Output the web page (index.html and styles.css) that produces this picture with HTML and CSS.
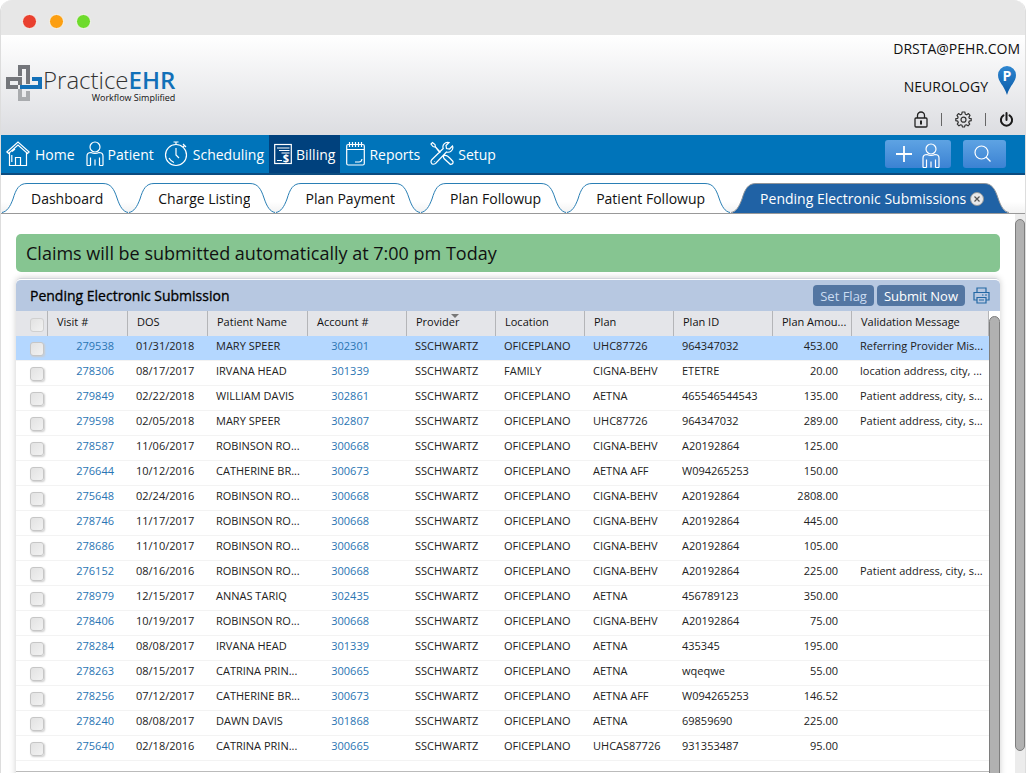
FILE: index.html
```html
<!DOCTYPE html>
<html lang="en">
<head>
<meta charset="utf-8">
<title>Practice EHR - Billing</title>
<link rel="stylesheet" href="styles.css">
</head>
<body>
<svg class="defs" aria-hidden="true">
  <symbol id="edge-left" viewBox="0 0 29 30"><path d="M0 30C5 29 8 24 11 16C14 6 17 .5 25 .5H29V30Z" stroke="none"/><path d="M0 29.500C5 28.500 8 24 11 16C14 6 17 .5 25 .5H29" fill="none"/></symbol>
  <symbol id="edge-right" viewBox="0 0 25 30"><path d="M0 .5C8 .5 11 6 14 15C17 24 20 29 25 30H0Z" stroke="none"/><path d="M0 .5C8 .5 11 6 14 15C17 24 20 28.500 25 29.500" fill="none"/></symbol>
  <symbol id="person" viewBox="0 0 18 25"><circle cx="9" cy="6" r="5"/><path d="M1 24.500V15C1 12.500 2.500 11.500 5 11.500Q9 13.500 13 11.500C15.500 11.500 17 12.500 17 15V24.500M4.500 24.500V16.500M13.500 24.500V16.500M9 24.500V18.500M1 24.500H4.500M13.500 24.500H17"/></symbol>
</svg>
<div class="window">
  <div class="titlebar"><span class="dot red"></span><span class="dot amber"></span><span class="dot green"></span></div>

  <header class="header">
    <div class="logo">
      <svg width="38" height="38" viewBox="0 0 38 38" fill="none" stroke-width="4">
        <path d="M15 25V35H23V27" stroke="#a9abae"/>
        <path d="M15 21V15H3V23H13" stroke="#74767b"/>
        <path d="M15 12V3H23V20" stroke="#74767b"/>
        <path d="M27 15H35V23H15" stroke="#1270b8"/>
      </svg>
      <div class="logo-text">
        <div class="logo-name">Practice<b>EHR</b></div>
        <div class="logo-tag">Workflow Simplified</div>
      </div>
    </div>
    <div class="account">
      <div class="account-user">DRSTA@PEHR.COM</div>
      <div class="account-site">
        <span>NEUROLOGY</span>
        <svg width="18" height="30" viewBox="0 0 18 30"><defs><linearGradient id="pin" x1="0" y1="0" x2="0" y2="1"><stop offset="0" stop-color="#2f86d0"/><stop offset="1" stop-color="#0a5ba8"/></linearGradient></defs><path d="M9 1A9 9 0 0 0 0 10C0 17 6 20 9 30C12 20 18 17 18 10A9 9 0 0 0 9 1Z" fill="url(#pin)"/><text x="9" y="16" text-anchor="middle" class="pin-letter">P</text></svg>
      </div>
      <div class="account-tools">
        <button aria-label="Lock"><svg width="14" height="17" viewBox="0 0 14 17" fill="none" stroke="#222" stroke-width="1.300"><rect x="1" y="7" width="12" height="9" rx="1"/><path d="M3.500 7V4.500a3.500 3.500 0 0 1 7 0V7"/><path d="M7 9.500V13.500" stroke-width="2"/></svg></button>
        <i></i>
        <button aria-label="Settings"><svg width="17" height="17" viewBox="0 0 17 17" fill="none" stroke="#333" stroke-width="1.200" stroke-linejoin="round"><path d="M7.200 1H9.800L10.300 3.200L11.700 3.800L13.500 2.600L15 4.400L13.900 6.100L14.300 7.300L16.200 7.700V9.700L14.200 10.200L13.700 11.400L14.700 13.100L13 14.800L11.300 13.800L10 14.300L9.500 16H7.500L7 14.300L5.700 13.800L4 14.800L2.300 13.100L3.300 11.400L2.800 10.200L.8 9.700V7.700L2.700 7.300L3.100 6.100L2 4.400L3.500 2.600L5.300 3.800L6.700 3.200Z"/><circle cx="8.500" cy="8.700" r="2.500"/></svg></button>
        <i></i>
        <button aria-label="Log out"><svg width="15" height="17" viewBox="0 0 15 17" fill="none" stroke="#1a1a1a" stroke-width="2" stroke-linecap="round"><path d="M4.500 4.300a5.600 5.600 0 1 0 6 0M7.500 2V9"/></svg></button>
      </div>
    </div>
  </header>

  <nav class="nav">
    <a href="#"><svg width="24" height="26" viewBox="0 0 24 26"><path d="M.8 11L12 1L23.200 11L21.500 12.500L12 4L2.500 12.500ZM3.500 12V24.500H20.500V12M9.500 24.500V16.500H14.500V24.500M5.800 14V21M6 10.500L9 8"/></svg><span>Home</span></a>
    <a href="#"><svg width="18" height="26" viewBox="0 0 18 26"><use href="#person" width="18" height="25"/></svg><span>Patient</span></a>
    <a href="#" class="wide"><svg width="24" height="26" viewBox="0 0 24 26"><circle cx="12" cy="14" r="10.500"/><path d="M12 7V14L15 17M9.500 1H14.500M12 1V3.500M19 3L22 6M20.500 4.500L19 6M5 17Q7 20.500 10 21.500"/></svg><span>Scheduling</span></a>
    <a href="#" class="current"><svg width="18" height="26" viewBox="0 0 18 26"><rect x=".7" y="3.500" width="16.600" height="19"/><path d="M3 7H15.500M5 9.500H15.500M7.500 12H15.500M3 19.500H8"/><text x="12" y="21" text-anchor="middle" class="dollar">$</text></svg><span>Billing</span></a>
    <a href="#"><svg width="19" height="26" viewBox="0 0 19 26"><rect x=".7" y="3.500" width="17.600" height="20.500" rx="1.500"/><path d="M3.500 1V6M6.500 1V6M9.500 1V6M12.500 1V6M15.500 1V6M1 8.500H18M9 21H13Q15.500 21 16 18"/></svg><span>Reports</span></a>
    <a href="#" class="last"><svg width="24" height="26" viewBox="0 0 24 26"><path d="M10.500 11.500L5.500 6L5 3.500L2.500 1.500L1 3L3 5.500L5.500 6.200L10 12M14 14.500C17 14 18 15 23 20.500Q23.500 23 20.500 23.500L14 17.500Q13 16 14 14.500ZM22.500 5L19.500 8L16.500 7.500L16 4.500L19 1.500C15 .5 12 4 13.200 7.500L2 18.500C0 20.500 1.500 25 5.500 22.500L16.500 11C20 12 24 9 22.500 5ZM4.500 20V20.500"/></svg><span>Setup</span></a>
    <div class="nav-actions">
      <button class="nav-button add" aria-label="Add patient"><svg width="16" height="16" viewBox="0 0 16 16"><path d="M8 0V16M0 8H16" stroke-width="1.800"/></svg><svg width="18" height="25" viewBox="0 0 18 25"><use href="#person" width="18" height="25"/></svg></button>
      <button class="nav-button find" aria-label="Search"><svg width="18" height="18" viewBox="0 0 18 18"><circle cx="7.500" cy="7.500" r="6.500"/><path d="M12 12L16.500 16.500"/></svg></button>
    </div>
  </nav>

  <div class="tabs" role="tablist">
    <button class="tab" role="tab"><svg width="29" height="30"><use href="#edge-left"/></svg><span>Dashboard</span><svg width="25" height="30"><use href="#edge-right"/></svg></button>
    <button class="tab" role="tab"><svg width="29" height="30"><use href="#edge-left"/></svg><span>Charge Listing</span><svg width="25" height="30"><use href="#edge-right"/></svg></button>
    <button class="tab" role="tab"><svg width="29" height="30"><use href="#edge-left"/></svg><span>Plan Payment</span><svg width="25" height="30"><use href="#edge-right"/></svg></button>
    <button class="tab" role="tab"><svg width="29" height="30"><use href="#edge-left"/></svg><span>Plan Followup</span><svg width="25" height="30"><use href="#edge-right"/></svg></button>
    <button class="tab" role="tab"><svg width="29" height="30"><use href="#edge-left"/></svg><span>Patient Followup</span><svg width="25" height="30"><use href="#edge-right"/></svg></button>
    <button class="tab active" role="tab" aria-selected="true"><svg width="29" height="30"><use href="#edge-left"/></svg><span>Pending Electronic Submissions<svg width="14" height="14" viewBox="0 0 14 14"><circle cx="7" cy="7" r="6.500" fill="#e9e9e9"/><path d="M4.500 4.500L9.500 9.500M9.500 4.500L4.500 9.500" stroke="#555" stroke-width="1.200"/></svg></span><svg width="25" height="30"><use href="#edge-right"/></svg></button>
  </div>

  <div class="page">
    <main class="content">
      <div class="banner">Claims will be submitted automatically at 7:00 pm Today</div>
      <section class="panel">
        <div class="panel-head">
          <h1>Pending Electronic Submission</h1>
          <button class="action muted">Set Flag</button>
          <button class="action">Submit Now</button>
          <button class="print" aria-label="Print"><svg width="17" height="17" viewBox="0 0 17 17" fill="none" stroke="#2468a4" stroke-width="1.200"><path d="M4 5V1H13V5M4 13H1V5.500H16V13H13M4 10.500H13V16H4ZM6 13H11M9 8H10.500M12 8H14"/></svg></button>
        </div>
        <div class="panel-body">
          <div class="grid">
            <table>
              <colgroup><col class="c-check"><col class="c-80"><col class="c-80"><col class="c-100"><col class="c-99"><col class="c-89"><col class="c-89"><col class="c-89"><col class="c-99"><col class="c-79"><col></colgroup>
              <thead><tr><th><input type="checkbox" aria-label="Select all"></th><th>Visit #</th><th>DOS</th><th>Patient Name</th><th>Account #</th><th class="sorted">Provider</th><th>Location</th><th>Plan</th><th>Plan ID</th><th>Plan Amou...</th><th>Validation Message</th></tr></thead>
              <tbody>
                <tr class="selected"><td><input type="checkbox" aria-label="Select 279538"></td><td><a href="#">279538</a></td><td>01/31/2018</td><td>MARY SPEER</td><td><a href="#">302301</a></td><td>SSCHWARTZ</td><td>OFICEPLANO</td><td>UHC87726</td><td>964347032</td><td>453.00</td><td>Referring Provider Mis...</td></tr>
                <tr><td><input type="checkbox" aria-label="Select 278306"></td><td><a href="#">278306</a></td><td>08/17/2017</td><td>IRVANA HEAD</td><td><a href="#">301339</a></td><td>SSCHWARTZ</td><td>FAMILY</td><td>CIGNA-BEHV</td><td>ETETRE</td><td>20.00</td><td>location address, city, ...</td></tr>
                <tr><td><input type="checkbox" aria-label="Select 279849"></td><td><a href="#">279849</a></td><td>02/22/2018</td><td>WILLIAM DAVIS</td><td><a href="#">302861</a></td><td>SSCHWARTZ</td><td>OFICEPLANO</td><td>AETNA</td><td>465546544543</td><td>135.00</td><td>Patient address, city, s...</td></tr>
                <tr><td><input type="checkbox" aria-label="Select 279598"></td><td><a href="#">279598</a></td><td>02/05/2018</td><td>MARY SPEER</td><td><a href="#">302807</a></td><td>SSCHWARTZ</td><td>OFICEPLANO</td><td>UHC87726</td><td>964347032</td><td>289.00</td><td>Patient address, city, s...</td></tr>
                <tr><td><input type="checkbox" aria-label="Select 278587"></td><td><a href="#">278587</a></td><td>11/06/2017</td><td>ROBINSON RO...</td><td><a href="#">300668</a></td><td>SSCHWARTZ</td><td>OFICEPLANO</td><td>CIGNA-BEHV</td><td>A20192864</td><td>125.00</td><td></td></tr>
                <tr><td><input type="checkbox" aria-label="Select 276644"></td><td><a href="#">276644</a></td><td>10/12/2016</td><td>CATHERINE BR...</td><td><a href="#">300673</a></td><td>SSCHWARTZ</td><td>OFICEPLANO</td><td>AETNA AFF</td><td>W094265253</td><td>150.00</td><td></td></tr>
                <tr><td><input type="checkbox" aria-label="Select 275648"></td><td><a href="#">275648</a></td><td>02/24/2016</td><td>ROBINSON RO...</td><td><a href="#">300668</a></td><td>SSCHWARTZ</td><td>OFICEPLANO</td><td>CIGNA-BEHV</td><td>A20192864</td><td>2808.00</td><td></td></tr>
                <tr><td><input type="checkbox" aria-label="Select 278746"></td><td><a href="#">278746</a></td><td>11/17/2017</td><td>ROBINSON RO...</td><td><a href="#">300668</a></td><td>SSCHWARTZ</td><td>OFICEPLANO</td><td>CIGNA-BEHV</td><td>A20192864</td><td>445.00</td><td></td></tr>
                <tr><td><input type="checkbox" aria-label="Select 278686"></td><td><a href="#">278686</a></td><td>11/10/2017</td><td>ROBINSON RO...</td><td><a href="#">300668</a></td><td>SSCHWARTZ</td><td>OFICEPLANO</td><td>CIGNA-BEHV</td><td>A20192864</td><td>105.00</td><td></td></tr>
                <tr><td><input type="checkbox" aria-label="Select 276152"></td><td><a href="#">276152</a></td><td>08/16/2016</td><td>ROBINSON RO...</td><td><a href="#">300668</a></td><td>SSCHWARTZ</td><td>OFICEPLANO</td><td>CIGNA-BEHV</td><td>A20192864</td><td>225.00</td><td>Patient address, city, s...</td></tr>
                <tr><td><input type="checkbox" aria-label="Select 278979"></td><td><a href="#">278979</a></td><td>12/15/2017</td><td>ANNAS TARIQ</td><td><a href="#">302435</a></td><td>SSCHWARTZ</td><td>OFICEPLANO</td><td>AETNA</td><td>456789123</td><td>350.00</td><td></td></tr>
                <tr><td><input type="checkbox" aria-label="Select 278406"></td><td><a href="#">278406</a></td><td>10/19/2017</td><td>ROBINSON RO...</td><td><a href="#">300668</a></td><td>SSCHWARTZ</td><td>OFICEPLANO</td><td>CIGNA-BEHV</td><td>A20192864</td><td>75.00</td><td></td></tr>
                <tr><td><input type="checkbox" aria-label="Select 278284"></td><td><a href="#">278284</a></td><td>08/08/2017</td><td>IRVANA HEAD</td><td><a href="#">301339</a></td><td>SSCHWARTZ</td><td>OFICEPLANO</td><td>AETNA</td><td>435345</td><td>195.00</td><td></td></tr>
                <tr><td><input type="checkbox" aria-label="Select 278263"></td><td><a href="#">278263</a></td><td>08/15/2017</td><td>CATRINA PRIN...</td><td><a href="#">300665</a></td><td>SSCHWARTZ</td><td>OFICEPLANO</td><td>AETNA</td><td>wqeqwe</td><td>55.00</td><td></td></tr>
                <tr><td><input type="checkbox" aria-label="Select 278256"></td><td><a href="#">278256</a></td><td>07/12/2017</td><td>CATHERINE BR...</td><td><a href="#">300673</a></td><td>SSCHWARTZ</td><td>OFICEPLANO</td><td>AETNA AFF</td><td>W094265253</td><td>146.52</td><td></td></tr>
                <tr><td><input type="checkbox" aria-label="Select 278240"></td><td><a href="#">278240</a></td><td>08/08/2017</td><td>DAWN DAVIS</td><td><a href="#">301868</a></td><td>SSCHWARTZ</td><td>OFICEPLANO</td><td>AETNA</td><td>69859690</td><td>225.00</td><td></td></tr>
                <tr><td><input type="checkbox" aria-label="Select 275640"></td><td><a href="#">275640</a></td><td>02/18/2016</td><td>CATRINA PRIN...</td><td><a href="#">300665</a></td><td>SSCHWARTZ</td><td>OFICEPLANO</td><td>UHCAS87726</td><td>931353487</td><td>95.00</td><td></td></tr>
              </tbody>
            </table>
          </div>
          <div class="grid-scroll"></div>
        </div>
      </section>
    </main>
    <div class="page-scroll"><span></span></div>
  </div>
</div>
</body>
</html>
```
FILE: styles.css
```css
* { box-sizing: border-box; }
body { margin: 0; background: #fff; color: #111; font: 14px/20px "Open Sans", "Noto Sans", sans-serif; }
button { margin: 0; padding: 0; border: 0; background: none; font: inherit; color: inherit; }
a { color: inherit; text-decoration: none; }
svg { display: block; flex: none; }
.defs { position: absolute; width: 0; height: 0; }

.window { display: flex; flex-direction: column; height: 100vh; overflow: hidden; border: solid #ddd; border-width: 0 1px; border-radius: 12px 12px 0 0; }
.titlebar { flex: none; display: flex; align-items: center; gap: 12px; height: 35px; padding: 7px 21px 0; background: #e7e7e7; }
.dot { width: 15px; height: 15px; border: 1px solid #f6f6f0; border-radius: 50%; }
.red { background: #e9402f; }
.amber { background: #fc9f12; }
.green { background: #6edb2c; }

.header { flex: none; display: flex; justify-content: space-between; height: 100px; padding: 4px 5px 0 4px; background: linear-gradient(#fff, #dcdde1); }
.logo { display: flex; padding-top: 25px; }
.logo-name { padding-top: 4px; font-size: 24px; line-height: 24px; font-weight: 300; color: #333; }
.logo-name b { font-weight: 600; color: #1270b8; }
.logo-tag { font-size: 9px; line-height: 12px; text-align: right; color: #111; }
.account { display: flex; flex-direction: column; align-items: flex-end; }
.account-site { display: flex; align-items: flex-end; gap: 10px; margin: 6px 4px 0 0; }
.account-site span { line-height: 17px; }
.pin-letter { font-size: 14px; font-weight: 700; fill: #fff; }
.account-tools { display: flex; align-items: center; gap: 13px; margin: 16px 6px 0 0; }
.account-tools i { width: 1px; height: 13px; background: #666; }

.nav { flex: none; display: flex; height: 40px; background: #0074ba; color: #fff; border-bottom: 2px solid #0c4c80; }
.nav a { display: flex; align-items: center; gap: 4px; padding: 0 5px 0 6px; }
.nav a span { padding-top: 2px; }
.nav a:first-child { padding-left: 5px; gap: 5px; }
.nav a.wide { gap: 5px; padding: 0 5px; }
.nav a.current { padding: 0 5px; background: #00417d; }
.nav a.last { padding-left: 5px; }
.nav svg { fill: none; stroke: #fff; stroke-width: 1.2; }
.nav .dollar { font-size: 11px; font-weight: 700; fill: #fff; stroke: none; }
.nav-actions { display: flex; align-items: center; gap: 12px; margin-left: auto; padding-right: 19px; }
.nav-button { display: flex; align-items: center; justify-content: center; height: 28px; border-radius: 3px; background: linear-gradient(#5ea3e3, #3b82d3); overflow: hidden; }
.add { width: 66px; gap: 10px; }
.find { width: 43px; padding-right: 4px; }
.add svg:last-child { margin-top: 3px; }

.tabs { flex: none; display: flex; gap: 1px; padding: 8px 0 0 1px; background: linear-gradient(#fff 70%, #f2f2f2); border-bottom: 1px solid #999; }
.tab { display: flex; white-space: nowrap; stroke: #2a7fb5; }
.tab use { fill: #fff; }
.tab > span { display: flex; align-items: center; gap: 4px; height: 30px; border-top: 1px solid #2a7fb5; background: #fff; }
.tab.active { color: #fff; stroke: #8f9499; }
.tab.active use { fill: #2062a5; }
.tab.active > span { background: #2062a5; border-color: #8f9499; }

.page { flex: 1; display: flex; min-height: 0; }
.content { flex: 1; min-width: 0; padding: 20px 15px 0; }
.banner { height: 38px; padding: 0 10px; border-radius: 5px; background: #86c591; font-size: 18px; line-height: 38px; }
.panel { margin-top: 6px; border-top: 1px solid #d3d6dc; border-radius: 5px; box-shadow: 0 0 6px #ccc; }
.panel-head { display: flex; align-items: center; gap: 3px; height: 32px; padding: 0 10px 0 14px; border-top: 1px solid #fff; border-radius: 5px 5px 0 0; background: #b7c8e1; }
.panel-head h1 { flex: 1; margin: 0; font-size: 14px; font-weight: 400; color: #000; -webkit-text-stroke: 0.3px #000; }
.action { height: 21px; padding: 0 7px; border-radius: 4px; background: #5376a2; color: #fff; font-size: 13px; line-height: 20px; }
.action.muted { color: #cbdcf2; }
.print { margin-left: 5px; }
.panel-body { display: flex; align-items: flex-start; background: #fff; }
.grid { flex: 1; min-width: 0; padding-bottom: 10px; border-bottom: 1px solid #bbb; }
.grid-scroll { flex: none; width: 11px; height: 600px; margin-top: 5px; border: 1px solid #7e7e7e; border-radius: 6px 6px 0 0; background: #b1b1b1; }

table { width: 100%; table-layout: fixed; border-collapse: separate; border-spacing: 0; font-size: 11px; line-height: 20px; }
.c-check { width: 32px; }
.c-79 { width: 79px; }
.c-80 { width: 80px; }
.c-89 { width: 89px; }
.c-99 { width: 99px; }
.c-100 { width: 100px; }
th, td { height: 25px; padding: 0 0 4px 8px; text-align: left; font-weight: 400; white-space: nowrap; overflow: hidden; }
th { position: relative; padding-left: 9px; background: #e4e5e9; border-right: 1px solid #b4b5b8; }
td { border-bottom: 1px solid #f3f3f3; color: #222; }
td:nth-child(2), td:nth-child(5), td:nth-child(10) { text-align: right; padding-right: 14px; }
td:nth-child(5) { padding-right: 38px; }
td a { color: #2a75b3; }
.selected td { background: #b4d7ff; }
.sorted::after { content: ""; position: absolute; top: 3px; left: 44px; border: solid transparent; border-width: 4px 4px 0; border-top-color: #777; }
th:first-child, td:first-child { padding: 2px 0 0 14px; }
input { display: block; appearance: none; width: 14px; height: 14px; margin: 0; border: 1px solid #c6c6c6; border-radius: 3px; background: linear-gradient(135deg, #e2e2e2, #f2f2f2); box-shadow: 1px 1px 2px #ccc; }
th input { border-color: #d0d0d0; box-shadow: none; }

.page-scroll { flex: none; width: 10px; height: 100%; padding-top: 5px; background: #ececec; }
.page-scroll span { display: block; height: 96%; border: 1px solid #7e7e7e; border-radius: 6px; background: #b1b1b1; }
```
